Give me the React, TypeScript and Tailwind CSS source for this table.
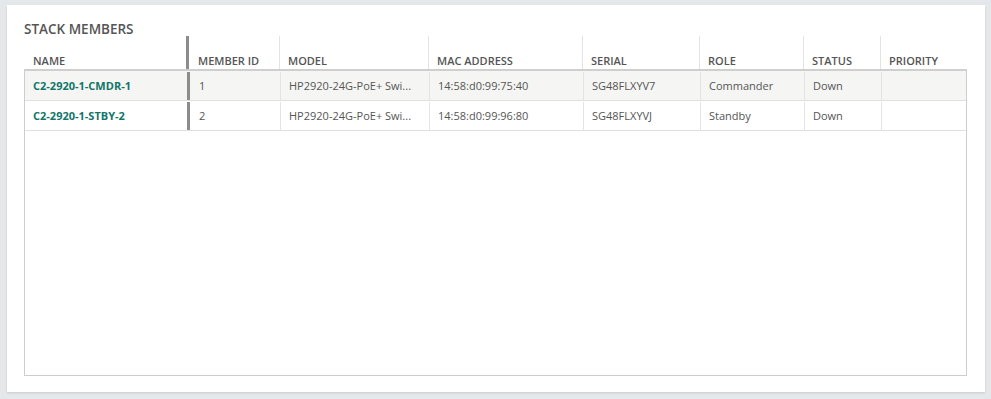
import React from "react";

interface Member {
  name: string;
  memberId: number;
  model: string;
  mac: string;
  serial: string;
  role: string;
  status: string;
  priority: string;
}

const MEMBERS: Member[] = [
  {
    name: "C2-2920-1-CMDR-1",
    memberId: 1,
    model: "HP2920-24G-PoE+ Swi...",
    mac: "14:58:d0:99:75:40",
    serial: "SG48FLXYV7",
    role: "Commander",
    status: "Down",
    priority: "",
  },
  {
    name: "C2-2920-1-STBY-2",
    memberId: 2,
    model: "HP2920-24G-PoE+ Swi...",
    mac: "14:58:d0:99:96:80",
    serial: "SG48FLXYVJ",
    role: "Standby",
    status: "Down",
    priority: "",
  },
];

// name | grip | member id | model | mac | serial | role | status | priority
const GRID = "grid grid-cols-[162px_3px_90px_149px_154px_117px_104px_77px_1fr]";

const App: React.FC = () => {
  return (
    <div
      className="h-[399px] w-[991px] bg-[#e5e8eb] pl-[7px] pt-[5px]"
      style={{ fontFamily: '"Open Sans", "Liberation Sans", sans-serif' }}
    >
      <div className="flex h-[387px] w-[978px] flex-col bg-white pl-[17px] pr-[18px] pt-[16px] pb-[16px] shadow-[0_1px_2px_rgba(0,0,0,0.12)]">
        <h2 className="text-[13.5px] leading-[17px] font-semibold text-[#555]">STACK MEMBERS</h2>

        <div className="mt-[-2px] flex min-h-0 flex-1 flex-col">
          {/* header */}
          <div className={`${GRID} h-[35px] border-b-2 border-[#cfcfcf] text-[11px] font-semibold text-[#555]`}>
            <div className="flex items-end px-[9px] pb-0">NAME</div>
            <div className="bg-[#8c8c8c]" />
            <div className="flex items-end px-[9px] pb-0">MEMBER ID</div>
            <div className="flex items-end border-l border-[#e3e3e3] px-[8px] pb-0">MODEL</div>
            <div className="flex items-end border-l border-[#e3e3e3] px-[8px] pb-0">MAC ADDRESS</div>
            <div className="flex items-end border-l border-[#e3e3e3] px-[8px] pb-0">SERIAL</div>
            <div className="flex items-end border-l border-[#e3e3e3] px-[8px] pb-0">ROLE</div>
            <div className="flex items-end border-l border-[#e3e3e3] px-[8px] pb-0">STATUS</div>
            <div className="flex items-end border-l border-[#e3e3e3] px-[8px] pb-0">PRIORITY</div>
          </div>

          {/* body */}
          <div className="min-h-0 flex-1 border-x border-b border-[#cdcdcd]">
            {MEMBERS.map((m, i) => (
              <div
                key={m.name}
                className={`${GRID} h-[30px] border-b border-[#e0e0e0] pt-[1px] text-[11px] text-[#555] ${
                  i === 0 ? "bg-[#f5f5f3]" : "bg-white"
                }`}
              >
                <div className="flex items-center px-[8px] font-bold text-[#11756a]">{m.name}</div>
                <div className="bg-[#8c8c8c]" />
                <div className="flex items-center px-[9px]">{m.memberId}</div>
                <div className="flex items-center border-l border-[#e3e3e3] px-[8px]">{m.model}</div>
                <div className="flex items-center border-l border-[#e3e3e3] px-[8px]">{m.mac}</div>
                <div className="flex items-center border-l border-[#e3e3e3] px-[8px]">{m.serial}</div>
                <div className="flex items-center border-l border-[#e3e3e3] px-[8px]">{m.role}</div>
                <div className="flex items-center border-l border-[#e3e3e3] px-[8px]">{m.status}</div>
                <div className="flex items-center border-l border-[#e3e3e3] px-[8px]">{m.priority}</div>
              </div>
            ))}
          </div>
        </div>
      </div>
    </div>
  );
};

export default App;
